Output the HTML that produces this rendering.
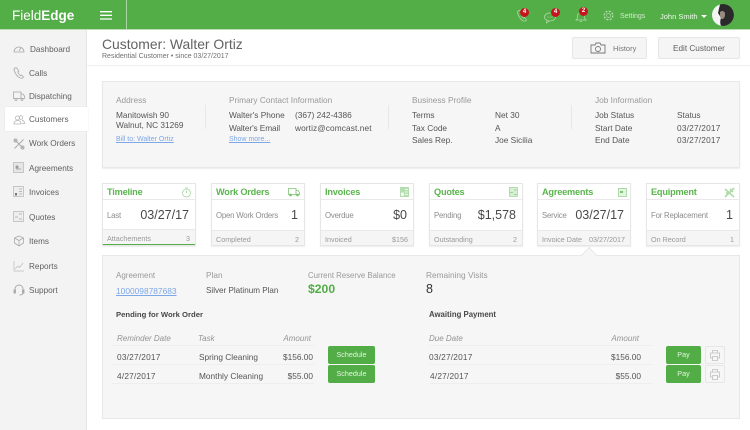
<!DOCTYPE html>
<html><head><meta charset="utf-8">
<style>
html,body{margin:0;padding:0}
body{width:750px;height:430px;position:relative;overflow:hidden;background:#fff;font-family:"Liberation Sans",sans-serif;color:#555}
#w{position:absolute;left:0;top:0;width:750px;height:430px;overflow:hidden;background:#fff;filter:blur(.3px)}
.a,.t,.r{position:absolute}
.t,.r{white-space:nowrap;font-size:8.3px;line-height:12px}
.r{text-align:right}
.d{letter-spacing:.2px}
.lab{color:#999}
.g{color:#939393;font-size:8px}
.ln{color:#7da7e6;text-decoration:underline}
.nav{font-size:8.2px;line-height:14px;color:#606060}
svg{position:absolute;overflow:visible}
.card{position:absolute;top:183px;height:61px;background:#fff;border:1px solid #e6e6e6;box-shadow:0 1px 1px #ececec}
.card .h{position:absolute;left:0;right:0;top:0;height:15px;border-bottom:1px solid #e9e9e9}
.card .f{position:absolute;left:0;right:0;bottom:0;height:14px;background:#f5f5f5;border-top:1px solid #e9e9e9}
.card b{position:absolute;left:4px;top:2px;font-size:9.2px;letter-spacing:-.2px;line-height:13px;color:#5ab54e;white-space:nowrap}
.card .l{position:absolute;left:4px;top:26px;font-size:7.8px;letter-spacing:-.2px;line-height:12px;color:#8c8c8c;white-space:nowrap}
.card .v{position:absolute;right:6px;top:23px;font-size:12.5px;line-height:16px;color:#484848;white-space:nowrap}
.card .fl{position:absolute;left:4px;top:3px;font-size:7.2px;line-height:12px;color:#999;white-space:nowrap}
.card .fr{position:absolute;right:5px;top:3px;font-size:7.2px;line-height:12px;color:#999;white-space:nowrap}
.btn{position:absolute;background:#53ad47;border-radius:2px;color:#e4f4e1;font-size:7.2px;line-height:18px;text-align:center}
.hr{position:absolute;height:1px;background:#eeeeee}
.bdg{position:absolute;width:9px;height:9px;border-radius:50%;background:#c5161d;color:#fff;font-size:6px;line-height:9px;text-align:center;font-weight:bold}
</style></head><body><div id="w">

<div class="a" style="left:0;top:0;width:750px;height:29px;background:#53ae47;box-shadow:0 1px 0 #b7dcb2"></div>
<div class="a" style="left:126px;top:0;width:1px;height:29px;background:#a9d6a3"></div>
<div class="t" style="left:12px;top:8px;font-size:13.5px;line-height:16px;color:#fff">Field<b>Edge</b></div>
<svg style="left:100px;top:0" width="12" height="22" viewBox="0 0 12 22" fill="none" stroke="#fff" stroke-width="1.300"><path d="M0 11.700h12M0 15.300h12M0 19h12"/></svg>

<svg style="left:516px;top:8px" width="14" height="16" viewBox="0 0 14 16" fill="none" stroke="#b5ddb0" stroke-width=".7"><path d="M2 3c-1 1 0 4 2 7s4 3.500 5 3l1.500-1-2-2.500-1.200.6c-1-.5-2-2.500-2-3.500l1-.8L4.500 2z"/></svg>
<div class="bdg" style="left:520px;top:8px">4</div>
<svg style="left:544px;top:11px" width="14" height="14" viewBox="0 0 14 14" fill="none" stroke="#b5ddb0" stroke-width=".7"><ellipse cx="6" cy="6" rx="5.500" ry="4"/><path d="M3 9.500 2.500 12 5.500 10"/><path d="M3.500 6h1M5.500 6h1M7.500 6h1"/></svg>
<div class="bdg" style="left:551px;top:8px">4</div>
<svg style="left:575px;top:10px" width="12" height="13" viewBox="0 0 12 13" fill="none" stroke="#b5ddb0" stroke-width=".7"><path d="M1 10c1.500-1 1.500-2 1.500-4S4 2.500 6 2.500 9.500 4 9.500 6s0 3 1.500 4zM5 11.500h2"/></svg>
<div class="bdg" style="left:579px;top:7px">2</div>
<svg style="left:603px;top:10px" width="12" height="12" viewBox="0 0 12 12" fill="none" stroke="#b5ddb0" stroke-width=".7"><circle cx="5.500" cy="5.500" r="2"/><circle cx="5.500" cy="5.500" r="4.300" stroke-dasharray="2 1.400" stroke-width="1.300"/></svg>
<div class="t" style="left:620px;top:11px;font-size:7px;color:#d0ebcc">Settings</div>
<div class="t" style="left:660px;top:11px;font-size:7.500px;color:#eef8ec">John Smith</div>
<div class="a" style="left:701px;top:15px;width:0;height:0;border-left:3px solid transparent;border-right:3px solid transparent;border-top:3px solid #fff"></div>
<svg style="left:712px;top:4px" width="22" height="22" viewBox="0 0 22 22"><circle cx="11" cy="11" r="11" fill="#f4f4f4"/><path d="M8 .4A11 11 0 1 1 9 21.800c-1-2-1-5 0-8L6 9z" fill="#2a2a2a"/><path d="M8 8c2-2 5-1 5 2s-1 5-3 5-2-3-2-7z" fill="#9a8a80"/></svg>

<div class="a" style="left:0;top:30px;width:87px;height:400px;background:#f3f3f3;border-right:1px solid #e6e6e6;box-sizing:border-box"></div>
<div class="a" style="left:5px;top:107px;width:83px;height:24px;background:#fff;box-shadow:0 0 1px #ddd"></div>

<div class="t nav" style="left:30px;top:43px">Dashboard</div>
<div class="t nav" style="left:29px;top:67px">Calls</div>
<div class="t nav" style="left:29px;top:90px">Dispatching</div>
<div class="t nav" style="left:29px;top:113px">Customers</div>
<div class="t nav" style="left:29px;top:137px">Work Orders</div>
<div class="t nav" style="left:29px;top:162px">Agreements</div>
<div class="t nav" style="left:29px;top:186px">Invoices</div>
<div class="t nav" style="left:29px;top:211px">Quotes</div>
<div class="t nav" style="left:29px;top:235px">Items</div>
<div class="t nav" style="left:29px;top:260px">Reports</div>
<div class="t nav" style="left:29px;top:284px">Support</div>

<svg style="left:13px;top:43px" width="12" height="12" viewBox="0 0 12 12" fill="none" stroke="#a8a8a8" stroke-width=".8"><path d="M1 9a5 5 0 1 1 10 0z"/><path d="M6 8l2-3"/></svg>
<svg style="left:13px;top:67px" width="12" height="12" viewBox="0 0 12 12" fill="none" stroke="#a8a8a8" stroke-width=".8"><path d="M1.500 1c-1 1 0 4 2 7s4.500 3.500 6 3l1-1-2-2-1 .6C6.500 8 5 6 4.800 4.800l1-.8L3.500.8z"/></svg>
<svg style="left:13px;top:90px" width="12" height="12" viewBox="0 0 12 12" fill="none" stroke="#a8a8a8" stroke-width=".8"><rect x=".5" y="2" width="7.500" height="6.500"/><path d="M8 4h2l1.500 2v2.500H8"/><circle cx="3" cy="9.500" r="1"/><circle cx="9" cy="9.500" r="1"/></svg>
<svg style="left:13px;top:114px" width="12" height="12" viewBox="0 0 12 12" fill="none" stroke="#b5b5b5" stroke-width=".8"><circle cx="4.500" cy="4" r="2"/><path d="M1 10c0-2.500 1.500-3.500 3.500-3.500S8 7.500 8 10z"/><circle cx="8" cy="3.500" r="1.800"/><path d="M9 6.200c1.500.3 2.500 1.300 2.500 3.300H9"/></svg>
<svg style="left:13px;top:138px" width="12" height="12" viewBox="0 0 12 12" fill="none" stroke="#aaaaaa" stroke-width="1"><path d="M1.500 1.500l9 9M10.500 1.500l-9 9"/><circle cx="2.500" cy="2.500" r="1.500"/><circle cx="9.500" cy="9.500" r="1.500"/></svg>
<svg style="left:13px;top:162px" width="11" height="12" viewBox="0 0 11 12"><rect x=".5" y=".5" width="10" height="10" fill="#e6e6e6" stroke="#b5b5b5" stroke-width=".7"/><path d="M3 4h2v2H3zM3 7h5" stroke="#999" stroke-width=".7" fill="#999"/></svg>
<svg style="left:13px;top:186px" width="11" height="12" viewBox="0 0 11 12"><rect x=".5" y=".5" width="10" height="10" fill="#eee" stroke="#b5b5b5" stroke-width=".7"/><path d="M2 7h2v2.500H2z" fill="#777"/><path d="M6 3h3M6 5.500h3M6 8h3" stroke="#aaa" stroke-width=".7"/></svg>
<svg style="left:13px;top:211px" width="11" height="12" viewBox="0 0 11 12"><rect x=".5" y=".5" width="10" height="10" fill="#eee" stroke="#b5b5b5" stroke-width=".7"/><path d="M6 3h3M2 6h3M6 8h3" stroke="#aaa" stroke-width=".7"/></svg>
<svg style="left:13px;top:235px" width="12" height="12" viewBox="0 0 12 12" fill="none" stroke="#aaaaaa" stroke-width=".8"><path d="M6 1l4.500 2v5L6 11 1.500 8V3zM1.500 3 6 5.500 10.500 3M6 5.500V11"/></svg>
<svg style="left:13px;top:260px" width="12" height="12" viewBox="0 0 12 12" fill="none" stroke="#bbbbbb" stroke-width=".7"><path d="M1 1v10h10M2 9l3-3 1.500 1.500L10 3"/></svg>
<svg style="left:13px;top:284px" width="12" height="12" viewBox="0 0 12 12" fill="none" stroke="#aaaaaa" stroke-width=".9"><path d="M2 7V5a4 4 0 0 1 8 0v2"/><rect x="1" y="6" width="1.500" height="3" fill="#aaa"/><rect x="9.500" y="6" width="1.500" height="3" fill="#aaa"/><path d="M10 9c0 1.500-2 2-3.500 2"/></svg>

<div class="t" style="left:102px;top:34px;font-size:13.900px;line-height:20px;color:#636363">Customer: Walter Ortiz</div>
<div class="t" style="left:102px;top:51px;font-size:7px;line-height:12px;color:#707070">Residential Customer • since 03/27/2017</div>
<div class="a" style="left:87px;top:65px;width:663px;height:1px;background:#efefef"></div>

<div class="a" style="left:572px;top:37px;width:73px;height:20px;background:#f5f5f5;border:1px solid #e6e6e6;border-radius:2px"></div>
<svg style="left:590px;top:42px" width="16" height="12" viewBox="0 0 16 12" fill="none" stroke="#777" stroke-width=".9"><path d="M1 3h4l1-2h4l1 2h4v8H1z"/><circle cx="8" cy="7" r="2.500"/></svg>
<div class="t" style="left:613px;top:43px;font-size:7.500px;color:#777">History</div>
<div class="a" style="left:658px;top:37px;width:80px;height:20px;background:#f5f5f5;border:1px solid #e6e6e6;border-radius:2px"></div>
<div class="t" style="left:673px;top:43px;font-size:8.200px;color:#606060">Edit Customer</div>

<div class="a" style="left:102px;top:81px;width:636px;height:85px;background:#f6f6f6;border:1px solid #e8e8e8;box-shadow:0 1px 1px #ececec"></div>
<div class="t lab" style="left:116px;top:94px">Address</div>
<div class="t" style="left:116px;top:109px">Manitowish 90</div>
<div class="t" style="left:116px;top:119px">Walnut, NC 31269</div>
<div class="t ln" style="left:116px;top:134px;font-size:7px">Bill to: Walter Ortiz</div>
<div class="a" style="left:205px;top:105px;width:1px;height:24px;background:#e8e8e8"></div>

<div class="t lab" style="left:229px;top:94px">Primary Contact Information</div>
<div class="t" style="left:229px;top:109px">Walter's Phone</div>
<div class="t" style="left:295px;top:109px">(367) 242-4386</div>
<div class="t" style="left:229px;top:122px;letter-spacing:-.1px">Walter's Email</div>
<div class="t" style="left:295px;top:122px;letter-spacing:.1px">wortiz@comcast.net</div>
<div class="t ln" style="left:229px;top:134px;font-size:7px">Show more...</div>
<div class="a" style="left:388px;top:105px;width:1px;height:24px;background:#e8e8e8"></div>

<div class="t lab" style="left:412px;top:94px">Business Profile</div>
<div class="t" style="left:412px;top:109px">Terms</div><div class="t" style="left:495px;top:109px">Net 30</div>
<div class="t" style="left:412px;top:122px">Tax Code</div><div class="t" style="left:495px;top:122px">A</div>
<div class="t" style="left:412px;top:134px">Sales Rep.</div><div class="t" style="left:495px;top:134px">Joe Sicilia</div>
<div class="a" style="left:571px;top:105px;width:1px;height:24px;background:#e8e8e8"></div>

<div class="t lab" style="left:595px;top:94px">Job Information</div>
<div class="t" style="left:595px;top:109px">Job Status</div><div class="t" style="left:677px;top:109px">Status</div>
<div class="t" style="left:595px;top:122px">Start Date</div><div class="t d" style="left:677px;top:122px">03/27/2017</div>
<div class="t" style="left:595px;top:134px">End Date</div><div class="t d" style="left:677px;top:134px">03/27/2017</div>

<div class="card" style="left:102px;width:92px"><div class="h"><b>Timeline</b></div><div class="l">Last</div><div class="v">03/27/17</div><div class="f" style="border-bottom:1px solid #56b04a"><span class="fl">Attachements</span><span class="fr">3</span></div></div>
<div class="card" style="left:211px;width:92px"><div class="h"><b>Work Orders</b></div><div class="l">Open Work Orders</div><div class="v">1</div><div class="f"><span class="fl">Completed</span><span class="fr">2</span></div></div>
<div class="card" style="left:320px;width:92px"><div class="h"><b>Invoices</b></div><div class="l">Overdue</div><div class="v">$0</div><div class="f"><span class="fl">Invoiced</span><span class="fr">$156</span></div></div>
<div class="card" style="left:429px;width:92px"><div class="h"><b>Quotes</b></div><div class="l">Pending</div><div class="v">$1,578</div><div class="f"><span class="fl">Outstanding</span><span class="fr">2</span></div></div>
<div class="card" style="left:537px;width:92px"><div class="h"><b>Agreements</b></div><div class="l">Service</div><div class="v">03/27/17</div><div class="f"><span class="fl">Invoice Date</span><span class="fr">03/27/2017</span></div></div>
<div class="card" style="left:646px;width:92px"><div class="h"><b>Equipment</b></div><div class="l">For Replacement</div><div class="v">1</div><div class="f"><span class="fl">On Record</span><span class="fr">1</span></div></div>

<svg style="left:182px;top:187px" width="10" height="11" viewBox="0 0 10 11" fill="none" stroke="#a6d8a0" stroke-width=".8"><circle cx="4.500" cy="6" r="4"/><path d="M3 1h3M4.500 3.500V6"/></svg>
<svg style="left:288px;top:188px" width="12" height="9" viewBox="0 0 12 9" fill="none" stroke="#7cc473" stroke-width=".8"><path d="M.5.500h7.500v6H.5zM8 2.500h2l1.500 2v2H8"/><circle cx="2.500" cy="7" r="1" fill="#7cc473"/><circle cx="9.500" cy="7" r="1" fill="#7cc473"/></svg>
<svg style="left:400px;top:187px" width="9" height="10" viewBox="0 0 9 10"><rect width="9" height="10" fill="#b5deb0"/><path d="M5 2.500h3M5 5h3M5 7.500h3M1.500 6h2v2.500h-2z" stroke="#fff" stroke-width=".7" fill="#fff"/></svg>
<svg style="left:509px;top:187px" width="9" height="10" viewBox="0 0 9 10"><rect x=".4" y=".4" width="8" height="9" fill="#d8efd5" stroke="#a6d8a0" stroke-width=".8"/><path d="M5 3h3M1 5.500h3M5 7.500h3" stroke="#8ccc85" stroke-width=".8"/></svg>
<svg style="left:618px;top:188px" width="9" height="9" viewBox="0 0 9 9"><rect x=".4" y=".4" width="8" height="8" fill="#e6f4e4" stroke="#9ad494" stroke-width=".8"/><rect x="2" y="3" width="3" height="2" fill="#7cc473"/></svg>
<svg style="left:724px;top:187px" width="11" height="11" viewBox="0 0 11 11" fill="none" stroke="#b0dcaa" stroke-width="1.800"><path d="M1 2l9 8M10 1l-9 9M2 6h3M6 2l3 3"/></svg>

<div class="a" style="left:102px;top:255px;width:636px;height:162px;background:#f6f6f6;border:1px solid #e8e8e8"></div>
<svg style="left:580px;top:246px" width="18" height="11" viewBox="0 0 18 11"><path d="M1 10 9 1.500l8 8.500" fill="#f6f6f6" stroke="#e8e8e8"/></svg>

<div class="t lab" style="left:116px;top:270px;font-size:8px">Agreement</div>
<div class="t ln" style="left:116px;top:285px;font-size:8.400px">1000098787683</div>
<div class="t lab" style="left:206px;top:269px">Plan</div>
<div class="t" style="left:206px;top:285px;font-size:8.100px">Silver Platinum Plan</div>
<div class="t lab" style="left:308px;top:270px;font-size:7.800px">Current Reserve Balance</div>
<div class="t" style="left:308px;top:281px;font-size:12.200px;line-height:16px;color:#53ad47;font-weight:bold">$200</div>
<div class="t lab" style="left:426px;top:269px">Remaining Visits</div>
<div class="t" style="left:426px;top:281px;font-size:12.500px;line-height:16px;color:#333">8</div>

<div class="t" style="left:116px;top:309px;font-weight:bold;font-size:7.700px;color:#484848">Pending for Work Order</div>
<div class="t g" style="left:117px;top:333px;font-style:italic">Reminder Date</div>
<div class="t g" style="left:198px;top:333px;font-style:italic">Task</div>
<div class="r g" style="right:439px;top:333px;font-style:italic">Amount</div>
<div class="hr" style="left:112px;top:345px;width:202px"></div>
<div class="t d" style="left:117px;top:351px">03/27/2017</div>
<div class="t" style="left:199px;top:351px">Spring Cleaning</div>
<div class="r" style="right:437px;top:351px">$156.00</div>
<div class="hr" style="left:112px;top:364px;width:202px"></div>
<div class="t d" style="left:117px;top:370px">4/27/2017</div>
<div class="t" style="left:199px;top:370px">Monthly Cleaning</div>
<div class="r" style="right:437px;top:370px">$55.00</div>
<div class="hr" style="left:112px;top:383px;width:202px"></div>
<div class="btn" style="left:328px;top:346px;width:47px;height:18px">Schedule</div>
<div class="btn" style="left:328px;top:365px;width:47px;height:18px">Schedule</div>

<div class="t" style="left:429px;top:309px;font-weight:bold;font-size:7.800px;color:#484848">Awaiting Payment</div>
<div class="t g" style="left:429px;top:333px;font-style:italic">Due Date</div>
<div class="r g" style="right:111px;top:333px;font-style:italic">Amount</div>
<div class="hr" style="left:430px;top:345px;width:223px"></div>
<div class="t d" style="left:429px;top:351px">03/27/2017</div>
<div class="r" style="right:109px;top:351px">$156.00</div>
<div class="hr" style="left:430px;top:364px;width:223px"></div>
<div class="t d" style="left:430px;top:370px">4/27/2017</div>
<div class="r" style="right:109px;top:370px">$55.00</div>
<div class="hr" style="left:430px;top:383px;width:223px"></div>
<div class="btn" style="left:666px;top:346px;width:35px;height:18px">Pay</div>
<div class="btn" style="left:666px;top:365px;width:35px;height:18px">Pay</div>
<div class="a" style="left:705px;top:346px;width:18px;height:16px;border:1px solid #e6e6e6;border-radius:2px"></div>
<div class="a" style="left:705px;top:365px;width:18px;height:16px;border:1px solid #e6e6e6;border-radius:2px"></div>
<svg style="left:710px;top:350px" width="10" height="11" viewBox="0 0 10 11" fill="none" stroke="#c0c0c0" stroke-width=".8"><path d="M2.500 3V.5h5V3M2.500 8H.5V3h9v5h-2M2.500 6.500h5v4h-5z"/></svg>
<svg style="left:710px;top:369px" width="10" height="11" viewBox="0 0 10 11" fill="none" stroke="#c0c0c0" stroke-width=".8"><path d="M2.500 3V.5h5V3M2.500 8H.5V3h9v5h-2M2.500 6.500h5v4h-5z"/></svg>

</div></body></html>
